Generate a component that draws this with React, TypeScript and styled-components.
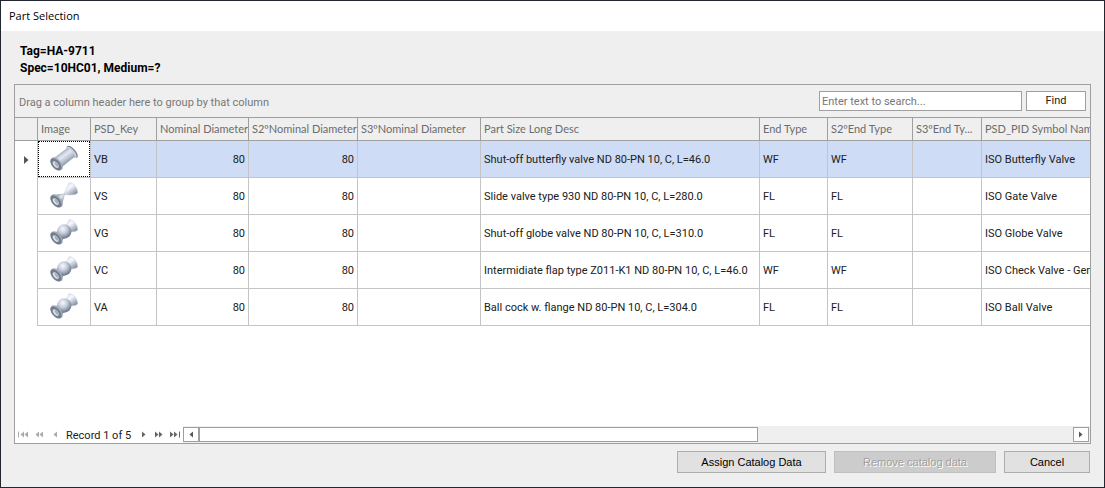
import React from 'react';
import styled, { createGlobalStyle, css } from 'styled-components';

const gridFont = 'Roboto, Tahoma, sans-serif';
const formFont = 'Roboto, "Liberation Sans", Arial, sans-serif';
const compactFont = '"Liberation Sans", Arial, sans-serif';
const headFont = 'Lato, Tahoma, sans-serif';

const GlobalStyle = createGlobalStyle`
  *, *::before, *::after { box-sizing: border-box; }
  body { margin: 0; background: #efefef; }
  button, input { font: inherit; color: inherit; margin: 0; }
`;

const Dialog = styled.main`
  display: flex;
  flex-direction: column;
  min-height: 100vh;
  border: 1px solid #22262e;
  background: #efefef;
  color: #000;
  font: 12px/16px ${formFont};
`;

const TitleBar = styled.header`
  height: 30px;
  padding: 0 8px;
  background: #fff;
`;

const Title = styled.h1`
  margin: 0;
  font: 400 11px/30px "Open Sans", "Segoe UI", sans-serif;
`;

const Content = styled.div`
  flex: 1;
  display: flex;
  flex-direction: column;
  padding: 12px 13px 14px;
`;

const Summary = styled.p`
  margin: 0 0 7px;
  padding: 0 6px;
  font-size: 12px;
  font-weight: 700;
  line-height: 17px;
`;

const GridPanel = styled.section`
  flex: 1;
  display: flex;
  flex-direction: column;
  border: 1px solid #9f9f9f;
  background: #fff;
  color: #202020;
  font: 11px/16px ${gridFont};
`;

const GroupPanel = styled.div`
  display: flex;
  align-items: center;
  gap: 4px;
  height: 33px;
  padding: 0 4px;
  border-bottom: 1px solid #9f9f9f;
  background: #efefef;
`;

const GroupHint = styled.span`
  flex: 1;
  padding-top: 4px;
  color: #777;
`;

const SearchBox = styled.input`
  width: 203px;
  height: 20px;
  padding: 0 2px;
  border: 1px solid #9f9f9f;
  border-radius: 0;
  background: #fff;
  &::placeholder { color: #777; opacity: 1; }
`;

const FindButton = styled.button`
  width: 60px;
  height: 20px;
  padding: 0;
  border: 1px solid #9f9f9f;
  background: #fff;
`;

const TableArea = styled.div`
  flex: 1;
  overflow: hidden;
`;

const Table = styled.table`
  width: 100%;
  min-width: 1000px;
  table-layout: fixed;
  border-collapse: separate;
  border-spacing: 0;
`;

const Col = styled.col<{ $width?: number }>`
  ${p => p.$width && css`width: ${p.$width}px;`}
`;

const HeadCell = styled.th`
  height: 23px;
  padding: 0 0 0 3px;
  border-right: 1px solid #9f9f9f;
  border-bottom: 1px solid #9f9f9f;
  background: #efefef;
  color: #6c6c6c;
  font: 400 11px/16px ${headFont};
  text-align: left;
  white-space: nowrap;
  &:last-child { border-right: 0; }
`;

const Cell = styled.td<{ $numeric?: boolean }>`
  height: 37px;
  padding: 2px 3px 0;
  border-right: 1px solid #c4c4c4;
  border-bottom: 1px solid #c4c4c4;
  text-align: ${p => (p.$numeric ? 'right' : 'left')};
  white-space: nowrap;
  overflow: hidden;
  &:last-child { border-right: 0; }
`;

const Row = styled.tr<{ $selected: boolean }>`
  background: ${p => (p.$selected ? '#cedcf5' : '#fff')};
`;

const IndicatorCell = styled(Cell)`
  padding: 0 0 0 9px;
  border-bottom: 0;
  background: #fff;
  line-height: 0;
`;

const ImageCell = styled(Cell)`
  padding: 0;
  background: #fff;
  line-height: 0;
`;

const ImageFrame = styled.div<{ $focused: boolean }>`
  display: flex;
  align-items: center;
  justify-content: center;
  height: 36px;
  border: 1px dotted ${p => (p.$focused ? '#000' : 'transparent')};
`;

const Footer = styled.div`
  display: flex;
  height: 17px;
`;

const Navigator = styled.nav`
  display: flex;
  align-items: center;
  width: 168px;
`;

const NavButton = styled.button<{ $width: number }>`
  display: flex;
  align-items: center;
  justify-content: center;
  width: ${p => p.$width}px;
  height: 16px;
  padding: 0;
  border: 0;
  background: none;
  color: #666;
  &:disabled { color: #aaa; }
`;

const RecordText = styled.span`
  flex: 1;
  padding: 2px 0 0 3px;
  white-space: nowrap;
`;

const ScrollBar = styled.div`
  flex: 1;
  display: flex;
  padding: 1px 1px 1px 0;
  background: #efefef;
`;

const ScrollTrack = styled.div`
  flex: 1;
`;

const ScrollThumb = styled.div`
  width: 64%;
  height: 15px;
  border: 1px solid #9f9f9f;
  background: #fff;
`;

const ScrollButton = styled.button`
  display: flex;
  align-items: center;
  justify-content: center;
  width: 16px;
  height: 15px;
  padding: 0;
  border: 1px solid #9f9f9f;
  background: #fff;
  color: #555;
`;

const Actions = styled.div`
  display: flex;
  justify-content: flex-end;
  gap: 8px;
  padding: 7px 1px 0 0;
  font: 11px/16px ${compactFont};
`;

const ActionButton = styled.button<{ $width: number }>`
  width: ${p => p.$width}px;
  height: 22px;
  padding: 0;
  border: 1px solid #adadad;
  background: #e1e1e1;
  &:disabled {
    border-color: #bfbfbf;
    background: #ccc;
    color: #a0a0a0;
    text-shadow: 1px 1px 0 #fff;
  }
`;

type ValveKind = 'pipe' | 'cones' | 'ball';

function ValveIcon({ kind, id }: { kind: ValveKind; id: string }) {
  const steel = `${id}-steel`;
  const ball = `${id}-ball`;
  const cone = `${id}-cone`;
  return (
    <svg width="28" height="28" viewBox="0 0 28 28" aria-hidden="true">
      <defs>
        <linearGradient id={steel} x1="0.25" y1="0.2" x2="0.75" y2="0.85">
          <stop offset="0" stopColor="#949dae" />
          <stop offset="0.35" stopColor="#e4e9f3" />
          <stop offset="0.6" stopColor="#bcc5d4" />
          <stop offset="1" stopColor="#6d7685" />
        </linearGradient>
        <linearGradient id={cone} x1="0.1" y1="0" x2="0.9" y2="1">
          <stop offset="0" stopColor="#d5def0" />
          <stop offset="0.4" stopColor="#f5f8fd" />
          <stop offset="0.7" stopColor="#b4bdcc" />
          <stop offset="1" stopColor="#737d8e" />
        </linearGradient>
        <radialGradient id={ball} cx="0.4" cy="0.32" r="0.7">
          <stop offset="0" stopColor="#f6f9ff" />
          <stop offset="0.45" stopColor="#c4ccdb" />
          <stop offset="1" stopColor="#667083" />
        </radialGradient>
      </defs>
      {kind === 'pipe' && (
        <>
          <ellipse cx="22.3" cy="6.8" rx="7.6" ry="3.2" transform="rotate(49 22.3 6.8)" fill="#7b8494" />
          <ellipse cx="21.5" cy="7.4" rx="7.2" ry="2.8" transform="rotate(49 21.5 7.4)" fill="#c9d1de" />
          <path d="M3.8 13 17.5 2.8Q23 5.4 25 11.4L11 22.8Z" fill={`url(#${steel})`} />
        </>
      )}
      {kind !== 'pipe' && (
        <path d="M13.5 12.5 19.2.6Q26.5 1.4 27.8 10.8Q25.5 14 13.5 12.5Z" fill={`url(#${cone})`} stroke="#c2cad8" strokeWidth=".5" />
      )}
      {kind === 'cones' && (
        <path d="M2.5 13.2 14.5 12 11.5 24.2Z" fill={`url(#${steel})`} stroke="#8b94a3" strokeWidth=".4" />
      )}
      {kind === 'ball' && (
        <>
          <path d="M3.5 14.3 9 11.5 14.5 18.5 11 23Z" fill={`url(#${steel})`} />
          <circle cx="14.2" cy="12.5" r="7.2" fill={`url(#${ball})`} />
        </>
      )}
      <ellipse cx="7" cy="18.6" rx="7.7" ry="4" transform="rotate(50 7 18.6)" fill="#a6afbd" />
      <ellipse cx="5.9" cy="19.4" rx="7.3" ry="4" transform="rotate(50 5.9 19.4)" fill="#747d8b" />
      <ellipse cx="5.8" cy="19.6" rx="3.9" ry="2.2" transform="rotate(50 5.8 19.6)" fill="#dbe1eb" />
      <ellipse cx="6.7" cy="19.3" rx="2.8" ry="1.3" transform="rotate(50 6.7 19.3)" fill="#a5aebb" />
    </svg>
  );
}

interface ArrowsProps {
  count: number;
  back?: boolean;
  bar?: boolean;
}

function Arrows({ count, back, bar }: ArrowsProps) {
  const width = count * 4 + (bar ? 2 : 0);
  return (
    <svg width={width} height="7" viewBox={`0 0 ${width} 7`} fill="currentColor" aria-hidden="true">
      <g transform={back ? `translate(${width} 0) scale(-1 1)` : undefined}>
        {Array.from({ length: count }, (_, i) => (
          <path key={i} d={`M${i * 4} .5l3.5 3-3.5 3z`} />
        ))}
        {bar && <path d={`M${width - 1} .5h1v6h-1z`} />}
      </g>
    </svg>
  );
}

function RowMarker() {
  return (
    <svg width="5" height="8" viewBox="0 0 5 8" fill="#555" aria-hidden="true">
      <path d="M0 0l4.5 4L0 8z" />
    </svg>
  );
}

interface Part {
  key: string;
  kind: ValveKind;
  desc: string;
  end: string;
  symbol: string;
}

const parts: Part[] = [
  { key: 'VB', kind: 'pipe', desc: 'Shut-off butterfly valve ND 80-PN 10, C, L=46.0', end: 'WF', symbol: 'ISO Butterfly Valve' },
  { key: 'VS', kind: 'cones', desc: 'Slide valve type 930 ND 80-PN 10, C, L=280.0', end: 'FL', symbol: 'ISO Gate Valve' },
  { key: 'VG', kind: 'ball', desc: 'Shut-off globe valve ND 80-PN 10, C, L=310.0', end: 'FL', symbol: 'ISO Globe Valve' },
  { key: 'VC', kind: 'ball', desc: 'Intermidiate flap type Z011-K1 ND 80-PN 10, C, L=46.0', end: 'WF', symbol: 'ISO Check Valve - General' },
  { key: 'VA', kind: 'ball', desc: 'Ball cock w. flange ND 80-PN 10, C, L=304.0', end: 'FL', symbol: 'ISO Ball Valve' },
];

const columns: { name: string; width?: number }[] = [
  { name: '', width: 23 },
  { name: 'Image', width: 53 },
  { name: 'PSD_Key', width: 66 },
  { name: 'Nominal Diameter', width: 92 },
  { name: 'S2ºNominal Diameter', width: 109 },
  { name: 'S3ºNominal Diameter', width: 123 },
  { name: 'Part Size Long Desc', width: 279 },
  { name: 'End Type', width: 68 },
  { name: 'S2ºEnd Type', width: 85 },
  { name: 'S3ºEnd Ty...', width: 69 },
  { name: 'PSD_PID Symbol Name' },
];

export default function App() {
  const selected = 0;
  return (
    <>
      <GlobalStyle />
      <Dialog>
        <TitleBar>
          <Title>Part Selection</Title>
        </TitleBar>
        <Content>
          <Summary>
            Tag=HA-9711
            <br />
            Spec=10HC01, Medium=?
          </Summary>
          <GridPanel>
            <GroupPanel>
              <GroupHint>Drag a column header here to group by that column</GroupHint>
              <SearchBox type="text" aria-label="Search" placeholder="Enter text to search..." />
              <FindButton type="button">Find</FindButton>
            </GroupPanel>
            <TableArea>
              <Table>
                <colgroup>
                  {columns.map(c => <Col key={c.name} $width={c.width} />)}
                </colgroup>
                <thead>
                  <tr>
                    {columns.map(c => <HeadCell key={c.name} scope="col">{c.name}</HeadCell>)}
                  </tr>
                </thead>
                <tbody>
                  {parts.map((p, i) => (
                    <Row key={p.key} $selected={i === selected} aria-selected={i === selected}>
                      <IndicatorCell>{i === selected && <RowMarker />}</IndicatorCell>
                      <ImageCell>
                        <ImageFrame $focused={i === selected}>
                          <ValveIcon kind={p.kind} id={p.key} />
                        </ImageFrame>
                      </ImageCell>
                      <Cell>{p.key}</Cell>
                      <Cell $numeric>80</Cell>
                      <Cell $numeric>80</Cell>
                      <Cell />
                      <Cell>{p.desc}</Cell>
                      <Cell>{p.end}</Cell>
                      <Cell>{p.end}</Cell>
                      <Cell />
                      <Cell>{p.symbol}</Cell>
                    </Row>
                  ))}
                </tbody>
              </Table>
            </TableArea>
            <Footer>
              <Navigator aria-label="Records">
                <NavButton type="button" $width={16} disabled aria-label="First"><Arrows count={2} back bar /></NavButton>
                <NavButton type="button" $width={16} disabled aria-label="Previous page"><Arrows count={2} back /></NavButton>
                <NavButton type="button" $width={16} disabled aria-label="Previous"><Arrows count={1} back /></NavButton>
                <RecordText>Record 1 of 5</RecordText>
                <NavButton type="button" $width={14} aria-label="Next"><Arrows count={1} /></NavButton>
                <NavButton type="button" $width={16} aria-label="Next page"><Arrows count={2} /></NavButton>
                <NavButton type="button" $width={16} aria-label="Last"><Arrows count={2} bar /></NavButton>
              </Navigator>
              <ScrollBar>
                <ScrollButton type="button" aria-label="Scroll left"><Arrows count={1} back /></ScrollButton>
                <ScrollTrack><ScrollThumb /></ScrollTrack>
                <ScrollButton type="button" aria-label="Scroll right"><Arrows count={1} /></ScrollButton>
              </ScrollBar>
            </Footer>
          </GridPanel>
          <Actions>
            <ActionButton type="button" $width={149}>Assign Catalog Data</ActionButton>
            <ActionButton type="button" $width={162} disabled>Remove catalog data</ActionButton>
            <ActionButton type="button" $width={86}>Cancel</ActionButton>
          </Actions>
        </Content>
      </Dialog>
    </>
  );
}
